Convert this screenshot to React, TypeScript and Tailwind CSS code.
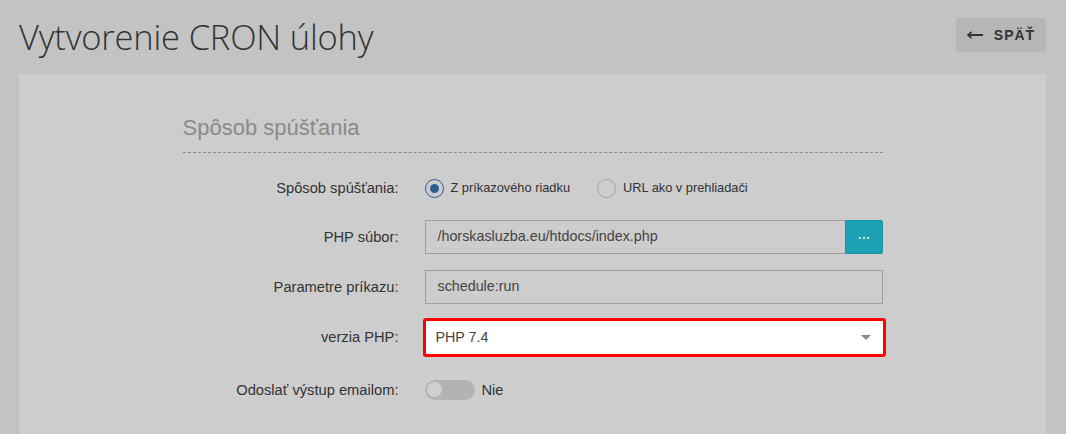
import React from "react";

const sans = { fontFamily: '"Liberation Sans", Arial, sans-serif' };

function Radio({ checked, label }: { checked?: boolean; label: string }) {
  return (
    <label className="flex items-center gap-[7px] cursor-pointer">
      <span
        className={`flex h-[19px] w-[19px] items-center justify-center rounded-full border ${
          checked ? "border-[#2d5f8f]" : "border-[#a3a3a3]"
        } bg-[#cdcdcd]`}
      >
        {checked && <span className="h-[9px] w-[9px] rounded-full bg-[#2b5e92]" />}
      </span>
      <span className="text-[12.8px] text-[#333]">{label}</span>
    </label>
  );
}

function Row({ label, children, className = "" }: { label: string; children: React.ReactNode; className?: string }) {
  return (
    <div className={`flex items-center ${className}`}>
      <div className="w-[216px] shrink-0 text-right text-[14.7px] text-[#333]">{label}</div>
      <div className="ml-[26px] flex-1">{children}</div>
    </div>
  );
}

export default function App() {
  return (
    <div className="h-[434px] w-full overflow-hidden bg-[#c3c3c3]" style={sans}>
      <div className="flex items-start justify-between pl-[19px] pr-[20px] pt-[18px]">
        <h1
          className="text-[34.5px] font-light leading-[38px] text-[#333] tracking-[-0.2px]"
          style={{ fontFamily: '"Open Sans", sans-serif' }}
        >
          Vytvorenie CRON úlohy
        </h1>
        <button className="flex h-[34px] w-[90px] items-center justify-center gap-[10px] rounded-[3px] bg-[#b6b6b6] text-[14px] font-bold text-[#333]">
          <svg width="17" height="8" viewBox="0 0 17 8" fill="none">
            <path d="M1 4 H16" stroke="#333" strokeWidth="2" />
            <path d="M4.5 0.8 L1 4 L4.5 7.2" stroke="#333" strokeWidth="1.6" fill="none" />
          </svg>
          <span className="tracking-[1px]">SPÄŤ</span>
        </button>
      </div>

      <div className="ml-[19px] mr-[20px] mt-[18px] h-[400px] bg-[#cdcdcd] pt-[40px]">
        <div className="mx-auto w-[700px]">
          <div className="border-b border-dashed border-[#8a8a8a] pb-[10px] text-[22px] leading-[28px] text-[#8a8a8a]">
            Spôsob spúšťania
          </div>

          <Row label="Spôsob spúšťania:" className="mt-[18px] h-[34px]">
            <div className="flex items-center gap-[27px]">
              <Radio checked label="Z príkazového riadku" />
              <Radio label="URL ako v prehliadači" />
            </div>
          </Row>

          <Row label="PHP súbor:" className="mt-[15px]">
            <div className="flex h-[34px]">
              <div className="flex flex-1 items-center border border-r-0 border-[#a0a0a0] px-[12px] text-[14.3px] text-[#444]">
                /horskasluzba.eu/htdocs/index.php
              </div>
              <div className="flex w-[38px] items-center justify-center rounded-r-[2px] border border-[#1a95a8] bg-[#1da1b4]">
                <span className="flex gap-[2px] pt-[2px]">
                  <span className="h-[2px] w-[2px] bg-[#ddd]" />
                  <span className="h-[2px] w-[2px] bg-[#ddd]" />
                  <span className="h-[2px] w-[2px] bg-[#ddd]" />
                </span>
              </div>
            </div>
          </Row>

          <Row label="Parametre príkazu:" className="mt-[16px]">
            <div className="flex h-[34px] items-center border border-[#a0a0a0] px-[12px] text-[14.3px] text-[#444]">
              schedule:run
            </div>
          </Row>

          <Row label="verzia PHP:" className="mt-[14px]">
            <div className="-ml-[2px] -mr-[3px] flex h-[39px] items-center justify-between rounded-[3px] border-[3px] border-[#ff0000] bg-white pl-[10px] pr-[12px] text-[14.3px] text-[#444]">
              <span>PHP 7.4</span>
              <svg width="10" height="6" viewBox="0 0 10 6">
                <path d="M0 0 H10 L5 5 Z" fill="#888" />
              </svg>
            </div>
          </Row>

          <Row label="Odoslať výstup emailom:" className="mt-[16px] h-[34px]">
            <div className="flex items-center gap-[7px]">
              <span className="flex h-[20px] w-[50px] items-center rounded-full bg-[#b3b3b3] px-[2px]">
                <span className="h-[15px] w-[15px] rounded-full bg-[#cfcfcf]" />
              </span>
              <span className="text-[14.7px] text-[#333]">Nie</span>
            </div>
          </Row>
        </div>
      </div>
    </div>
  );
}
